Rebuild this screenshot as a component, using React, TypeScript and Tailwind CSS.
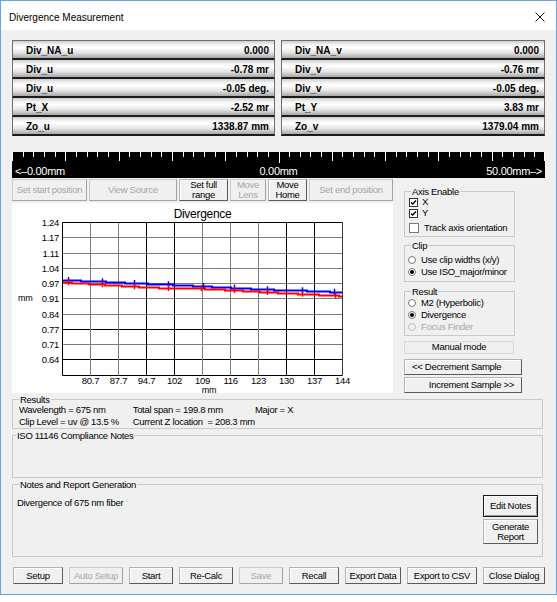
import clsx from 'clsx';
import type { ReactNode } from 'react';

const FONT = "font-['Liberation_Sans',Arial,sans-serif]";
const SVG_FONT = 'Liberation Sans, Arial, sans-serif';

const leftRows: [string, string][] = [
  ['Div_NA_u', '0.000'],
  ['Div_u', '-0.78 mr'],
  ['Div_u', '-0.05 deg.'],
  ['Pt_X', '-2.52 mr'],
  ['Zo_u', '1338.87 mm'],
];

const rightRows: [string, string][] = [
  ['Div_NA_v', '0.000'],
  ['Div_v', '-0.76 mr'],
  ['Div_v', '-0.05 deg.'],
  ['Pt_Y', '3.83 mr'],
  ['Zo_v', '1379.04 mm'],
];

const Readout = ({ rows }: { rows: [string, string][] }) => (
  <div className="flex flex-col border-t border-[#6e6e6e]">
    {rows.map(([label, value]) => (
      <div
        key={label + value}
        className="h-[19px] flex items-center justify-between pl-[13px] pr-[5px] pt-[1px] border-x border-[#6e6e6e] border-b-2 border-b-[#1c1c1c] bg-[linear-gradient(to_bottom,#cdcdcd_0%,#f4f4f4_22%,#ffffff_38%,#e4e4e4_68%,#a8a8a8_100%)] text-[10px] font-bold text-black"
      >
        <span>{label}</span>
        <span>{value}</span>
      </div>
    ))}
  </div>
);

type BtnProps = {
  children: ReactNode;
  disabled?: boolean;
  isDefault?: boolean;
  className?: string;
};

const Btn = ({ children, disabled, isDefault, className }: BtnProps) => (
  <button
    type="button"
    className={clsx(
      'flex items-center justify-center text-center bg-[#f0f0f0] leading-[10px]',
      disabled && 'border border-[#cbcbcb] border-r-[#a3a3a3] border-b-[#a3a3a3] text-[#a6a6a6]',
      !disabled && !isDefault && 'border border-[#b4b4b4] border-r-[#5a5a5a] border-b-[#5a5a5a] shadow-[inset_1px_1px_0_#ffffff] text-black',
      isDefault && 'border border-[#1a1a1a] shadow-[inset_1px_1px_0_#ffffff,inset_-1px_-1px_0_#9a9a9a] text-black',
      className
    )}
  >
    {children}
  </button>
);

const Group = ({
  title,
  className,
  legendClass,
  children,
}: {
  title: string;
  className?: string;
  legendClass?: string;
  children: ReactNode;
}) => (
  <fieldset className={clsx('border border-[#c9c9c9] px-[3px]', className)}>
    <legend className={clsx('px-[1px]', legendClass)}>{title}</legend>
    {children}
  </fieldset>
);

const Check = ({ checked, big, label }: { checked?: boolean; big?: boolean; label: string }) => (
  <div className={clsx('flex items-center pl-[1px]', big ? 'h-[12px] mt-[3px] gap-[5px]' : 'h-[11px] gap-[4px]')}>
    <span
      className={clsx(
        'bg-white flex items-center justify-center',
        big ? 'w-[10px] h-[10px] border border-[#7a7a7a]' : 'w-[9px] h-[9px] border border-[#333333]'
      )}
    >
      {checked && (
        <svg width="7" height="7" viewBox="0 0 7 7">
          <path d="M1 3.4 L2.7 5.1 L6 1.6" stroke="#000" strokeWidth="1.4" fill="none" />
        </svg>
      )}
    </span>
    <span>{label}</span>
  </div>
);

const Radio = ({ checked, disabled, label }: { checked?: boolean; disabled?: boolean; label: string }) => (
  <div className={clsx('h-[12px] flex items-center gap-[5px]', disabled && 'text-[#a6a6a6]')}>
    <span
      className={clsx(
        'w-[8px] h-[8px] rounded-full border flex items-center justify-center',
        disabled ? 'border-[#bdbdbd] bg-[#f0f0f0]' : 'border-[#7a7a7a] bg-white'
      )}
    >
      {checked && <span className="w-[4px] h-[4px] rounded-full bg-black" />}
    </span>
    <span>{label}</span>
  </div>
);

const Ruler = () => {
  const ticks = Array.from({ length: 51 }, (_, i) => {
    const x = Math.min(532.5, Math.round(i * 10.66) + 0.5);
    const len = i === 25 ? 11 : i % 5 === 0 ? 9 : 5;
    return <line key={i} x1={x} x2={x} y1={0} y2={len} stroke="#fff" strokeWidth="1" />;
  });
  return (
    <div className="mt-[16px] h-[26px] bg-black flex flex-col">
      <svg width="533" height="13" className="block">
        {ticks}
      </svg>
      <div className="grid grid-cols-3 px-[3px] text-white text-[11px] leading-[13px]">
        <span>&lt;–0.00mm</span>
        <span className="text-center">0.00mm</span>
        <span className="text-right">50.00mm–&gt;</span>
      </div>
    </div>
  );
};

const stepPath = (pts: [number, number][]) => {
  const first = Math.ceil(pts[0][0]);
  const last = Math.floor(pts[pts.length - 1][0]);
  let d = '';
  let prev: number | null = null;
  let k = 0;
  for (let x = first; x <= last; x++) {
    while (k < pts.length - 2 && x > pts[k + 1][0]) k++;
    const [xa, ya] = pts[k];
    const [xb, yb] = pts[k + 1];
    const y = Math.round(ya + ((yb - ya) * (x - xa)) / (xb - xa)) + 0.5;
    if (prev === null) d = `M${x} ${y}`;
    else if (y !== prev) d += `H${x}V${y}`;
    prev = y;
  }
  return d + `H${last}`;
};

const bluePts: [number, number][] = [
  [50.5, 77], [56, 77], [89.7, 78.3], [122, 80], [156, 81.3], [190.7, 83],
  [222, 84.7], [255, 86.3], [289.7, 87.3], [322, 88.7], [330.5, 89],
];
const redPts: [number, number][] = [
  [50.5, 79], [56, 79.3], [89.7, 81.3], [122.3, 83.3], [156.3, 85], [188.7, 85.3],
  [222.3, 87], [255.3, 89], [289.7, 90.7], [323, 92.3], [330.5, 92.7],
];

const Chart = () => {
  const x0 = 50.5;
  const y0 = 19.5;
  const pw = 280;
  const ph = 152.5;
  const yLabels = ['1.24', '1.17', '1.11', '1.04', '0.97', '0.91', '0.84', '0.77', '0.71', '0.64'];
  const xLabels = ['80.7', '87.7', '94.7', '102', '109', '116', '123', '130', '137', '144'];
  const hy = (i: number) => Math.round(y0 + (i * ph) / 10 - 0.5) + 0.5;
  const vx = (j: number) => x0 + j * 28;
  const darkH = [0, 7, 9, 10];
  const darkV = [0, 3, 4, 8, 9];
  return (
    <svg width="381" height="190" className="block" fontFamily={SVG_FONT}>
      <text x="190.5" y="15" fontSize="12" textAnchor="middle" fill="#000">
        Divergence
      </text>
      {Array.from({ length: 11 }, (_, i) => (
        <line
          key={'h' + i}
          x1={x0}
          x2={x0 + pw}
          y1={hy(i)}
          y2={hy(i)}
          stroke={darkH.includes(i) ? '#000' : '#7c7c7c'}
          strokeWidth="1"
        />
      ))}
      {Array.from({ length: 11 }, (_, j) => (
        <line
          key={'v' + j}
          x1={vx(j)}
          x2={vx(j)}
          y1={y0}
          y2={hy(10)}
          stroke={darkV.includes(j) ? '#000' : j === 10 ? '#3a3a3a' : '#7c7c7c'}
          strokeWidth="1"
        />
      ))}
      {yLabels.map((l, i) => (
        <text key={l} x="47" y={hy(i) + 3.5} fontSize="9.5" letterSpacing="-0.3" textAnchor="end" fill="#000">
          {l}
        </text>
      ))}
      {xLabels.map((l, j) => (
        <text key={l} x={vx(j + 1)} y="181" fontSize="9.5" letterSpacing="-0.3" textAnchor="middle" fill="#000">
          {l}
        </text>
      ))}
      <text x="6" y="98" fontSize="9" fill="#000">
        mm
      </text>
      <text x="197" y="189.5" fontSize="9" textAnchor="middle" fill="#000">
        mm
      </text>
      <path d={stepPath(bluePts)} stroke="#0000ff" strokeWidth="2" fill="none" />
      <path d={stepPath(redPts)} stroke="#ff0000" strokeWidth="2" fill="none" />
      {bluePts.slice(1, -1).map(([x, y]) => (
        <line key={'bm' + x} x1={Math.round(x) + 0.5} x2={Math.round(x) + 0.5} y1={y - 3} y2={y + 3} stroke="#0000ff" strokeWidth="1.5" />
      ))}
      {redPts.slice(1, -1).map(([x, y]) => (
        <line key={'rm' + x} x1={Math.round(x) + 0.5} x2={Math.round(x) + 0.5} y1={y - 3} y2={y + 3} stroke="#ff0000" strokeWidth="1.5" />
      ))}
    </svg>
  );
};

export default function App() {
  return (
    <div className={clsx('w-[557px] h-[602px] bg-white text-black', FONT)}>
      <div className="w-[557px] h-[595px] border border-[#62a6e8] bg-[#f0f0f0] flex flex-col">
        {/* title bar */}
        <div className="h-[29px] bg-white flex items-center justify-between pl-[8px] pr-[11px] pt-[3px]">
          <span className="text-[10px]">Divergence Measurement</span>
          <svg width="10" height="10" viewBox="0 0 10 10">
            <path d="M0.5 0.5 L9.5 9.5 M9.5 0.5 L0.5 9.5" stroke="#111" strokeWidth="1" />
          </svg>
        </div>

        <div className="flex-1 px-[11px] pt-[10px] flex flex-col text-[9.5px] tracking-[-0.3px]">
          {/* readouts */}
          <div className="grid grid-cols-[263px_264px] gap-x-[6px] tracking-normal">
            <Readout rows={leftRows} />
            <Readout rows={rightRows} />
          </div>

          <Ruler />

          <div className="flex">
            <div className="w-[381px] flex flex-col">
              <div className="mt-[1px] h-[22px] flex gap-[2px]">
                <Btn disabled className="w-[75px]">Set start position</Btn>
                <Btn disabled className="w-[88px]">View Source</Btn>
                <Btn className="w-[49px]">Set full<br />range</Btn>
                <Btn disabled className="w-[36px]">Move<br />Lens</Btn>
                <Btn className="w-[39px]">Move<br />Home</Btn>
                <Btn disabled className="w-[84px]">Set end position</Btn>
              </div>
              <div className="mt-[2px] h-[190px] bg-white">
                <Chart />
              </div>
            </div>

            <div className="ml-[11px] pt-[8px] w-[118px] flex flex-col">
              <Group title="Axis Enable" className="w-[111px] pb-[2px]" legendClass="ml-[3px] leading-[11px]">
                <Check checked label="X" />
                <Check checked label="Y" />
                <Check big label="Track axis orientation" />
              </Group>
              <Group title="Clip" className="w-[111px] mt-[3px] pb-[3px]" legendClass="ml-[3px] leading-[11px]">
                <div className="mt-[3px]" />
                <Radio label="Use clip widths (x/y)" />
                <Radio checked label="Use ISO_major/minor" />
              </Group>
              <Group title="Result" className="w-[111px] mt-[4px] pb-[2px]" legendClass="ml-[3px] leading-[11px]">
                <Radio label="M2 (Hyperbolic)" />
                <Radio checked label="Divergence" />
                <Radio disabled label="Focus Finder" />
              </Group>
              <div className="mt-[5px] h-[13px] w-[110px] border border-[#d9d9d9] flex items-center justify-center">
                Manual mode
              </div>
              <Btn className="mt-[5px] h-[16px] w-[118px] !justify-start pl-[7px]">&lt;&lt; Decrement Sample</Btn>
              <Btn className="mt-[2px] h-[16px] w-[118px] !justify-end pr-[7px]">Increment Sample &gt;&gt;</Btn>
            </div>
          </div>

          {/* results */}
          <Group title="Results" className="w-[531px] mt-[2px]" legendClass="ml-[3px] leading-[9px]">
            <div className="pl-[3px] grid grid-cols-[113.7px_122.3px_1fr] leading-[12px] whitespace-pre">
              <span>Wavelength = 675 nm</span>
              <span>Total span = 199.8 mm</span>
              <span>Major = X</span>
              <span>Clip Level = uv @ 13.5 %</span>
              <span>Current Z location  = 208.3 mm</span>
              <span />
            </div>
          </Group>

          <Group title="ISO 11146 Compliance Notes" className="w-[531px] mt-[2px]" legendClass="leading-[9px]">
            <div className="h-[37px]" />
          </Group>

          <Group title="Notes and Report Generation" className="w-[531px] mt-[2px] pb-[12px] pl-[4px] pr-[4px]" legendClass="ml-[2px] leading-[9px]">
            <div className="flex justify-between">
              <span className="mt-[8px] leading-[12px]">Divergence of 675 nm fiber</span>
              <div className="mt-[6px] flex flex-col gap-[2px]">
                <Btn isDefault className="w-[55px] h-[22px]">Edit Notes</Btn>
                <Btn className="w-[55px] h-[25px]">Generate<br />Report</Btn>
              </div>
            </div>
          </Group>

          {/* bottom buttons */}
          <div className="mt-[10px] h-[17px] ml-[1px] flex gap-[6px]">
            <Btn className="w-[50px]">Setup</Btn>
            <Btn disabled className="w-[54px]">Auto Setup</Btn>
            <Btn className="w-[44px]">Start</Btn>
            <Btn className="w-[54px]">Re-Calc</Btn>
            <Btn disabled className="w-[44px]">Save</Btn>
            <Btn className="w-[50px]">Recall</Btn>
            <Btn className="w-[56px]">Export Data</Btn>
            <Btn className="w-[70px]">Export to CSV</Btn>
            <Btn className="w-[62px]">Close Dialog</Btn>
          </div>
        </div>
      </div>
    </div>
  );
}
